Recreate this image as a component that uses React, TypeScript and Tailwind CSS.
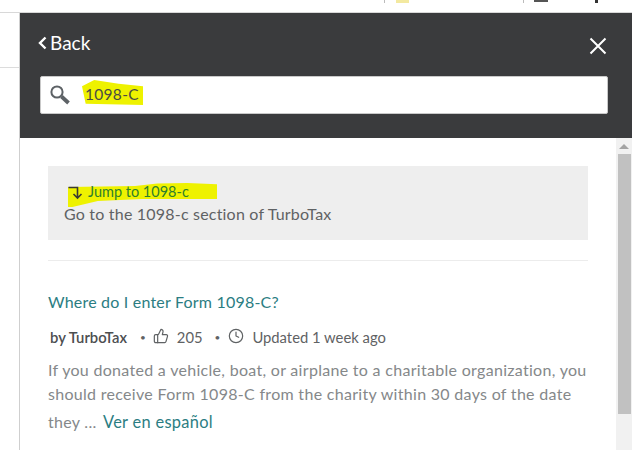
import React from 'react';
import { ThumbsUp, Clock } from 'lucide-react';

const font = "font-['Lato','Open_Sans',sans-serif]";

function Highlight({ className, points }: { className: string; points: string }) {
  return (
    <svg className={`absolute ${className}`} viewBox="0 0 100 100" preserveAspectRatio="none">
      <polygon points={points} fill="#eef200" />
    </svg>
  );
}

function TopStrip() {
  return (
    <div className="relative h-[13px] shrink-0 border-b border-[#d8d8d8] bg-white">
      {/* bits of browser toolbar icons cut off by the crop */}
      <div className="absolute left-[384px] top-0 h-[3px] w-px bg-[#bbb]" />
      <div className="absolute left-[396px] top-0 h-[3px] w-[13px] bg-[#f3e9a0]" />
      <div className="absolute left-[523px] top-0 h-[3px] w-px bg-[#bbb]" />
      <div className="absolute left-[534px] top-0 h-[2px] w-[14px] bg-[#555]" />
      <div className="absolute left-[595px] top-0 h-[3px] w-[3px] bg-[#333]" />
    </div>
  );
}

function Header() {
  return (
    <div className="relative h-[125px] shrink-0 bg-[#3a3b3d] pl-5 pr-6">
      <div className="flex items-center justify-between pt-[16px]">
        <div className="-ml-[2px] flex items-center gap-[3px] text-[19px] leading-[28px] text-white">
          <svg width="9" height="14" viewBox="0 0 9 14" fill="none" stroke="white" strokeWidth="2.4">
            <path d="M7.5 1.5 2 7l5.5 5.5" />
          </svg>
          <span>Back</span>
        </div>
        <svg className="mr-[1px] mt-[5px]" width="18" height="18" viewBox="0 0 18 18" fill="none" stroke="white" strokeWidth="2">
          <path d="M1.5 1.5l15 15M16.5 1.5l-15 15" />
        </svg>
      </div>
      <div className="relative mt-[19px] flex h-[38px] items-center rounded-[2px] border border-[#c9c9c9] bg-white pl-[8px]">
        <Highlight className="left-[41px] top-[3px] h-[25px] w-[61px]" points="0,25 20,0 60,15 100,25 100,100 6,95" />
        <svg width="22" height="22" viewBox="0 0 22 22" fill="none">
          <circle cx="8" cy="8" r="5.6" stroke="#5d6266" strokeWidth="2" />
          <path d="M12.5 12.5l7 6.5" stroke="#5d6266" strokeWidth="3.8" />
        </svg>
        <span className="relative ml-[14px] text-[15.5px] leading-none tracking-[0.3px] text-[#4a4c45]">1098-C</span>
      </div>
    </div>
  );
}

function JumpCard() {
  return (
    <div className="relative h-[74px] bg-[#eeeeee] pl-4 pt-[16px]">
      <Highlight className="left-[20px] top-[17px] h-[24px] w-[149px]" points="0,17 45,12 60,2 80,0 100,5 100,67 50,67 20,75 3,100 0,100" />
      <div className="relative flex h-[20px] items-center pl-[4px] text-[14.5px] text-[#2f7f2c]">
        <svg className="mr-[5px]" width="15" height="15" viewBox="0 0 15 15" fill="none" stroke="#3a3a32" strokeWidth="1.6">
          <path d="M0.5 2.5h9v10M5.5 9l4 4 4-4" />
        </svg>
        <span>Jump to 1098-c</span>
      </div>
      <p className="mt-[1px] text-[16px] leading-[22px] tracking-[0.2px] text-[#5f6264]">Go to the 1098-c section of TurboTax</p>
    </div>
  );
}

function Article() {
  return (
    <div className="pt-[30px]">
      <a className="block text-[16px] leading-[22px] tracking-[0.2px] text-[#2b7d82]">Where do I enter Form 1098-C?</a>
      <div className="mt-[13px] flex h-[22px] items-center text-[14.8px] text-[#5f6264]">
        <span className="ml-[2px] font-semibold text-[#4c4e50]">by TurboTax</span>
        <span className="ml-[13px] mr-[7px] text-[10px]">•</span>
        <ThumbsUp className="size-[16px] -translate-y-[1px]" strokeWidth={1.8} />
        <span className="ml-[8px]">205</span>
        <span className="ml-[12px] mr-[8px] text-[10px]">•</span>
        <Clock className="size-[16px] -translate-y-[1px]" strokeWidth={1.8} />
        <span className="ml-[8px]">Updated 1 week ago</span>
      </div>
      <p className="mt-[10px] text-[16px] leading-[24px] tracking-[0.3px] text-[#85888a]">
        If you donated a vehicle, boat, or airplane to a charitable organization, you should receive Form 1098-C from the charity within 30 days of the date they ...{' '}
        <a className="ml-[2px] text-[16.4px] leading-[32px] text-[#2b7d82]">Ver en español</a>
      </p>
    </div>
  );
}

function Scrollbar() {
  return (
    <div className="flex w-[16px] shrink-0 flex-col bg-[#f1f1f1]">
      <div className="ml-[3px] mt-[6px] h-0 w-0 border-x-[5px] border-b-[5px] border-x-transparent border-b-[#a3a3a3]" />
      <div className="ml-[2px] mt-[5px] h-[260px] w-[13px] bg-[#c1c1c1]" />
    </div>
  );
}

export default function App() {
  return (
    <div className={`flex h-[450px] w-[632px] flex-col overflow-hidden bg-white ${font}`}>
      <TopStrip />
      <div className="flex min-h-0 flex-1">
        <div className="w-[19px] shrink-0">
          <div className="mt-[54px] border-t border-[#dcdcdc]" />
        </div>
        <div className="flex min-w-0 flex-1 flex-col border-l border-[#cfcfcf]">
          <Header />
          <div className="flex min-h-0 flex-1">
            <div className="min-w-0 flex-1 overflow-hidden pl-[28px] pr-[28px] pt-[28px]">
              <JumpCard />
              <div className="mt-[20px] border-t border-[#ececec]" />
              <Article />
            </div>
            <Scrollbar />
          </div>
        </div>
      </div>
    </div>
  );
}
